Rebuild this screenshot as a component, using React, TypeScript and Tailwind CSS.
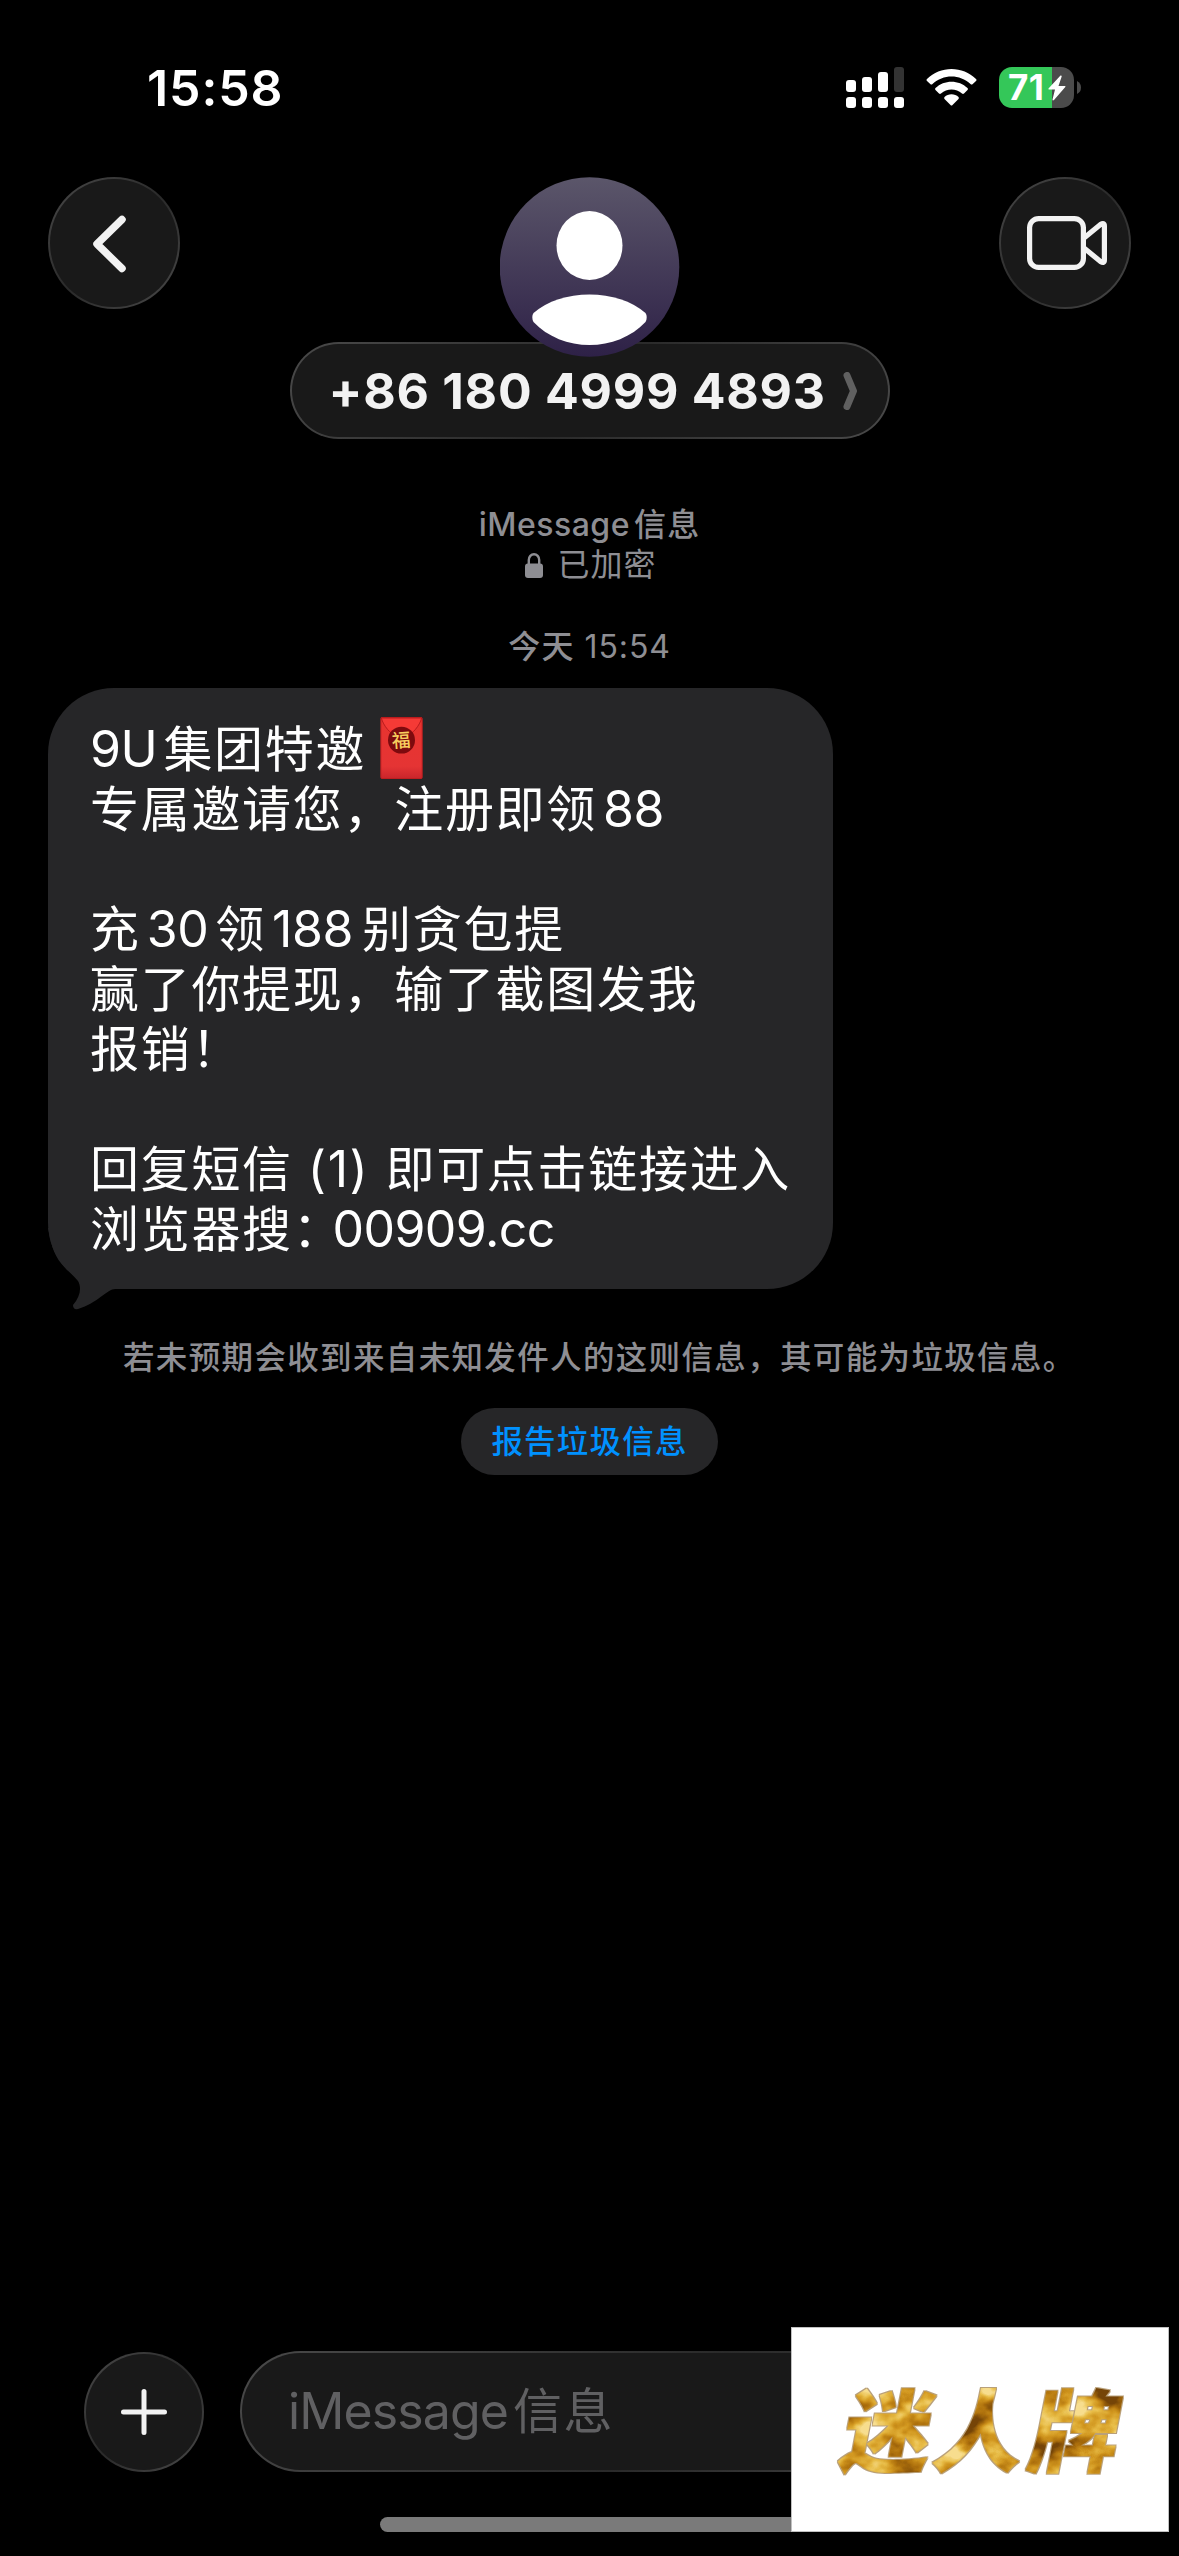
import type { ReactNode } from 'react';

const FONT = "font-['Inter','Noto_Sans_CJK_SC',sans-serif]";
const GLASS = "bg-linear-135 from-[#4a4a4a] via-[#2a2a2a] to-[#4a4a4a] p-[2px]";

function Zh({ children, className = '' }: { children: ReactNode; className?: string }) {
  return <span className={`text-[49px] tracking-[1.7px] ${className}`}>{children}</span>;
}

function Line({ children }: { children?: ReactNode }) {
  return <div className="h-[60px] whitespace-pre text-[50px] leading-[60px] tracking-[-0.4px]">{children}</div>;
}

function RedEnvelope() {
  return (
    <svg className="absolute left-[290px] top-[-2px] h-[63px] w-[43px]" viewBox="0 0 43 64">
      <defs>
        <linearGradient id="packet" x1="0" y1="0" x2="0" y2="1">
          <stop offset="0" stopColor="#e8342f" />
          <stop offset="0.8" stopColor="#e53434" />
          <stop offset="1" stopColor="#c9252b" />
        </linearGradient>
      </defs>
      <rect x="0.5" y="0.5" width="42" height="62" rx="1" fill="url(#packet)" stroke="#c01e20" />
      <path d="M1 1h41c-2 8-10 17-14 17H15C11 18 3 9 1 1z" fill="#f53a36" stroke="#b81a1c" strokeWidth="1" />
      <circle cx="21.500" cy="23.500" r="13.700" fill="#7d0a0e" />
      <text x="21" y="30.500" textAnchor="middle" fontSize="19" fontWeight="500" fill="#f7cf5e" fontFamily="Noto Sans CJK SC" transform="rotate(-4 21 24)">福</text>
    </svg>
  );
}

function StatusBar() {
  return (
    <div className="flex h-[177px] items-start justify-between pl-[147px] pr-[98px] text-white">
      <div className="mt-[58px] text-[50px] font-semibold leading-[60px] tracking-[0.900px]">15:58</div>
      <div className="mt-[67px] flex items-start">
        <svg width="58" height="41" viewBox="0 0 58 41" fill="#fff">
          <rect x="0" y="13" width="10" height="12" rx="3" />
          <rect x="16" y="10" width="10" height="15" rx="3" />
          <rect x="32" y="5" width="10" height="20" rx="3" />
          <rect x="48" y="0" width="10" height="25" rx="3" fill="#333" />
          <rect x="0" y="30" width="10" height="11" rx="3" />
          <rect x="16" y="30" width="10" height="11" rx="3" />
          <rect x="32" y="30" width="10" height="11" rx="3" />
          <rect x="48" y="30" width="10" height="11" rx="3" />
        </svg>
        <svg className="ml-[22px] mt-[1px]" width="51" height="38" viewBox="0 0 51 38" fill="#fff">
          <path d="M1 11C14-2.500 37-2.500 50 11Q51 12 50 13L46.500 16.200Q45.500 17 44.500 16C34 6 17 6 6.500 16Q5.500 17 4.500 16.200L1 13Q0 12 1 11Z" />
          <path d="M9.500 20C18 11.500 33 11.500 41.500 20Q42.500 21 41.500 22L38 25.500Q37 26.300 36 25.500C30 20 21 20 15 25.500Q14 26.300 13 25.500L9.500 22Q8.500 21 9.500 20Z" />
          <path d="M18.500 29C22 25.300 29 25.300 32.500 29Q33.300 30 32.500 31L26.500 37Q25.500 38 24.500 37L18.500 31Q17.700 30 18.500 29Z" />
        </svg>
        <div className="ml-[22px] flex items-center">
          <div className="flex h-[41px] w-[75px] items-center overflow-hidden rounded-[13px] bg-linear-to-r from-[#34c759] from-[53px] to-[#4b4b4b] to-[53px] pl-[9px]">
            <span className="w-[40px] shrink-0 text-[35px] font-bold leading-[41px] tracking-[0.500px]">71</span>
            <svg className="mt-px shrink-0" width="18" height="26" viewBox="0 0 18 26" fill="#fff">
              <path d="M12.500 0.500L0.500 13.500Q0 14.500 1 14.500H7L4.500 24.500Q4.500 26 6 25L17.300 12Q17.800 11 17 11H10.500L13.700 1.500Q13.700 0 12.500 0.500Z" />
            </svg>
          </div>
          <svg className="ml-[3px]" width="4" height="13" viewBox="0 0 4 13"><path d="M0 0Q4 2 4 6.500T0 13Z" fill="#4b4b4b" /></svg>
        </div>
      </div>
    </div>
  );
}

function Header() {
  return (
    <header className="flex h-[262px] items-start justify-between px-[48px]">
      <div className={`size-[132px] rounded-full ${GLASS}`}>
        <div className="flex size-full items-center justify-center rounded-full bg-[#191919]">
          <svg className="-ml-[10px] mt-[1px]" width="34" height="58" viewBox="0 0 34 58" fill="none">
            <path d="M30 4.500L5 29L30 53.500" stroke="#f2f2f2" strokeWidth="7.500" strokeLinecap="round" strokeLinejoin="round" />
          </svg>
        </div>
      </div>

      <div className="flex flex-col items-center">
        <svg className="z-10" width="180" height="180" viewBox="0 0 180 180">
          <defs>
            <linearGradient id="avatar" x1="0" y1="0" x2="0" y2="1">
              <stop offset="0" stopColor="#5b566a" />
              <stop offset="1" stopColor="#2e2147" />
            </linearGradient>
          </defs>
          <circle cx="89.500" cy="90" r="89.800" fill="url(#avatar)" />
          <ellipse cx="89.500" cy="68.500" rx="33" ry="34.500" fill="#fff" />
          <path d="M33.500 136C47.500 124 67.500 117.500 89.500 117.500S131.500 124 145.500 136Q148 140 145.500 145C131.500 160 110.500 168 89.500 168S47.500 160 33.500 145Q31 140 33.500 136Z" fill="#fff" />
        </svg>
        <div className={`-mt-[15px] h-[97px] w-[600px] rounded-full ${GLASS}`}>
          <div className="flex size-full items-center rounded-full bg-[#191919] pl-[37px]">
            <span className="w-[514px] whitespace-pre text-[50px] font-bold leading-[60px] tracking-[0.750px] text-[#f2f2f2]">+86 180 4999 4893</span>
            <svg width="14" height="38" viewBox="0 0 14 38" fill="none">
              <path d="M4 3.500L10.500 19L4 34.500" stroke="#606060" strokeWidth="7" strokeLinecap="round" strokeLinejoin="round" />
            </svg>
          </div>
        </div>
      </div>

      <div className={`size-[132px] rounded-full ${GLASS}`}>
        <div className="flex size-full items-center justify-center rounded-full bg-[#191919]">
          <svg className="ml-[4px]" width="80" height="54" viewBox="0 0 80 54" fill="none" stroke="#f2f2f2" strokeWidth="5.200" strokeLinejoin="round">
            <rect x="2.600" y="2.600" width="53.800" height="48.800" rx="9" />
            <path d="M57 22L73.500 8.500Q77.400 6 77.400 10V44Q77.400 48 73.500 45.500L57 32" />
          </svg>
        </div>
      </div>
    </header>
  );
}

export default function App() {
  return (
    <div className={`relative flex h-[2556px] w-[1179px] flex-col overflow-hidden bg-black ${FONT}`}>
      <StatusBar />
      <Header />

      <main className="flex flex-1 flex-col">
        <div className="mt-[66px] flex flex-col items-center text-[32px] leading-[40px] text-[#8e8e93]">
          <div className="h-[40px] font-medium tracking-[0.500px]">
            iMessage<span className="ml-[4px] tracking-[1.200px]">信息</span>
          </div>
          <div className="flex h-[40px] items-center pl-[3px]">
            <svg className="mr-[14px]" width="18" height="25" viewBox="0 0 18 25">
              <rect y="10.500" width="18" height="14.500" rx="3" fill="#8e8e93" />
              <path d="M3.800 12V7a5.200 5.800 0 0 1 10.400 0V12" fill="none" stroke="#8e8e93" strokeWidth="2.400" />
            </svg>
            <span className="tracking-[1px]">已加密</span>
          </div>
          <div className="mt-[42px] h-[40px] tracking-[0.900px]"><span className="font-medium tracking-[1.200px]">今天</span> 15:54</div>
        </div>

        <div className="relative isolate ml-[48px] mt-[21px] h-[601px] w-[785px] rounded-[66px] bg-[#262628] pl-[42px] pt-[31px] text-white">
          <svg className="absolute left-0 top-[540px] -z-10" width="90" height="82" viewBox="0 0 90 82">
            <path d="M0 0H90V61H68C60 60 50 75 30 81Q25 82 25 77C32 69 34 60 30 53C22 43 8 36 3 14Z" fill="#262628" />
          </svg>
          <div className="relative">
            <Line>9U<Zh className="ml-[6px]">集团特邀</Zh></Line>
            <RedEnvelope />
          </div>
          <Line><Zh>专属邀请您，注册即领</Zh><span className="ml-[6px]">88</span></Line>
          <Line />
          <Line><Zh>充</Zh><span className="ml-[6px] mr-[7px]">30</span><Zh>领</Zh><span className="ml-[6px] mr-[9px]">188</span><Zh>别贪包提</Zh></Line>
          <Line><Zh>赢了你提现，输了截图发我</Zh></Line>
          <Line><Zh>报销！</Zh></Line>
          <Line />
          <Line><Zh>回复短信</Zh><span className="ml-[15px] mr-[16px] tracking-[1.600px]">(1)</span><Zh>即可点击链接进入</Zh></Line>
          <Line><Zh>浏览器搜：</Zh><span className="-ml-[11px] tracking-[-0.600px]">00909.cc</span></Line>
        </div>

        <p className="ml-[123px] mt-[49px] whitespace-nowrap text-[31.500px] font-medium leading-[40px] tracking-[1.350px] text-[#8e8e93]">
          若未预期会收到来自未知发件人的这则信息，其可能为垃圾信息。
        </p>
        <button className="mt-[30px] h-[67px] w-[257px] self-center rounded-full bg-[#262628] text-[31.500px] font-medium tracking-[1.200px] text-[#0091ff]">
          报告垃圾信息
        </button>
      </main>

      <footer className="h-[205px]">
        <div className="flex pl-[84px]">
          <div className={`mt-px size-[120px] rounded-full ${GLASS}`}>
            <div className="flex size-full items-center justify-center rounded-full bg-[#191919]">
              <svg width="46" height="46" viewBox="0 0 46 46" stroke="#f2f2f2" strokeWidth="5" strokeLinecap="round">
                <path d="M23 2.500V43.500M2.500 23H43.500" />
              </svg>
            </div>
          </div>
          <div className={`ml-[36px] h-[121px] w-[855px] rounded-full ${GLASS}`}>
            <div className="flex size-full items-center rounded-full bg-[#191919] pl-[46px] text-[50px] tracking-[-0.900px] text-[#606062]">
              iMessage<Zh className="ml-[5px]">信息</Zh>
            </div>
          </div>
        </div>
        <div className="mx-auto mt-[45px] h-[15px] w-[419px] rounded-full bg-[#7a7a7a]" />
      </footer>

      <Watermark />
    </div>
  );
}

// gold foil: noise mapped onto a brown-to-yellow ramp, clipped to the lettering
function Watermark() {
  return (
    <div className="absolute left-[791px] top-[2327px] h-[205px] w-[378px] border border-[#c0c0c0] bg-white">
      <svg width="376" height="203" viewBox="0 0 376 203">
        <defs>
          <filter id="foil" x="-5%" y="-10%" width="110%" height="120%" colorInterpolationFilters="sRGB">
            <feTurbulence type="fractalNoise" baseFrequency="0.02 0.028" numOctaves="4" seed="11" result="noise" />
            <feColorMatrix in="noise" type="matrix" values="2.4 0 0 0 -0.68  2.4 0 0 0 -0.68  2.4 0 0 0 -0.68  0 0 0 0 1" />
            <feComponentTransfer result="gold">
              <feFuncR type="table" tableValues="0.46 0.68 0.82 0.91 0.97" />
              <feFuncG type="table" tableValues="0.27 0.44 0.59 0.74 0.87" />
              <feFuncB type="table" tableValues="0.03 0.05 0.12 0.28 0.56" />
            </feComponentTransfer>
            <feComposite in="gold" in2="SourceAlpha" operator="in" result="letters" />
            <feMorphology in="SourceAlpha" operator="dilate" radius="0.5" result="fat" />
            <feFlood floodColor="#8a6020" floodOpacity="0.6" />
            <feComposite in2="fat" operator="in" result="edge" />
            <feMerge>
              <feMergeNode in="edge" />
              <feMergeNode in="letters" />
            </feMerge>
          </filter>
        </defs>
        <g filter="url(#foil)">
          <text transform="translate(45 137) skewX(-11)" x="0 93 188" y="0" fontSize="90" fontWeight="900" fontFamily="Noto Sans CJK SC">迷人牌</text>
        </g>
      </svg>
    </div>
  );
}
